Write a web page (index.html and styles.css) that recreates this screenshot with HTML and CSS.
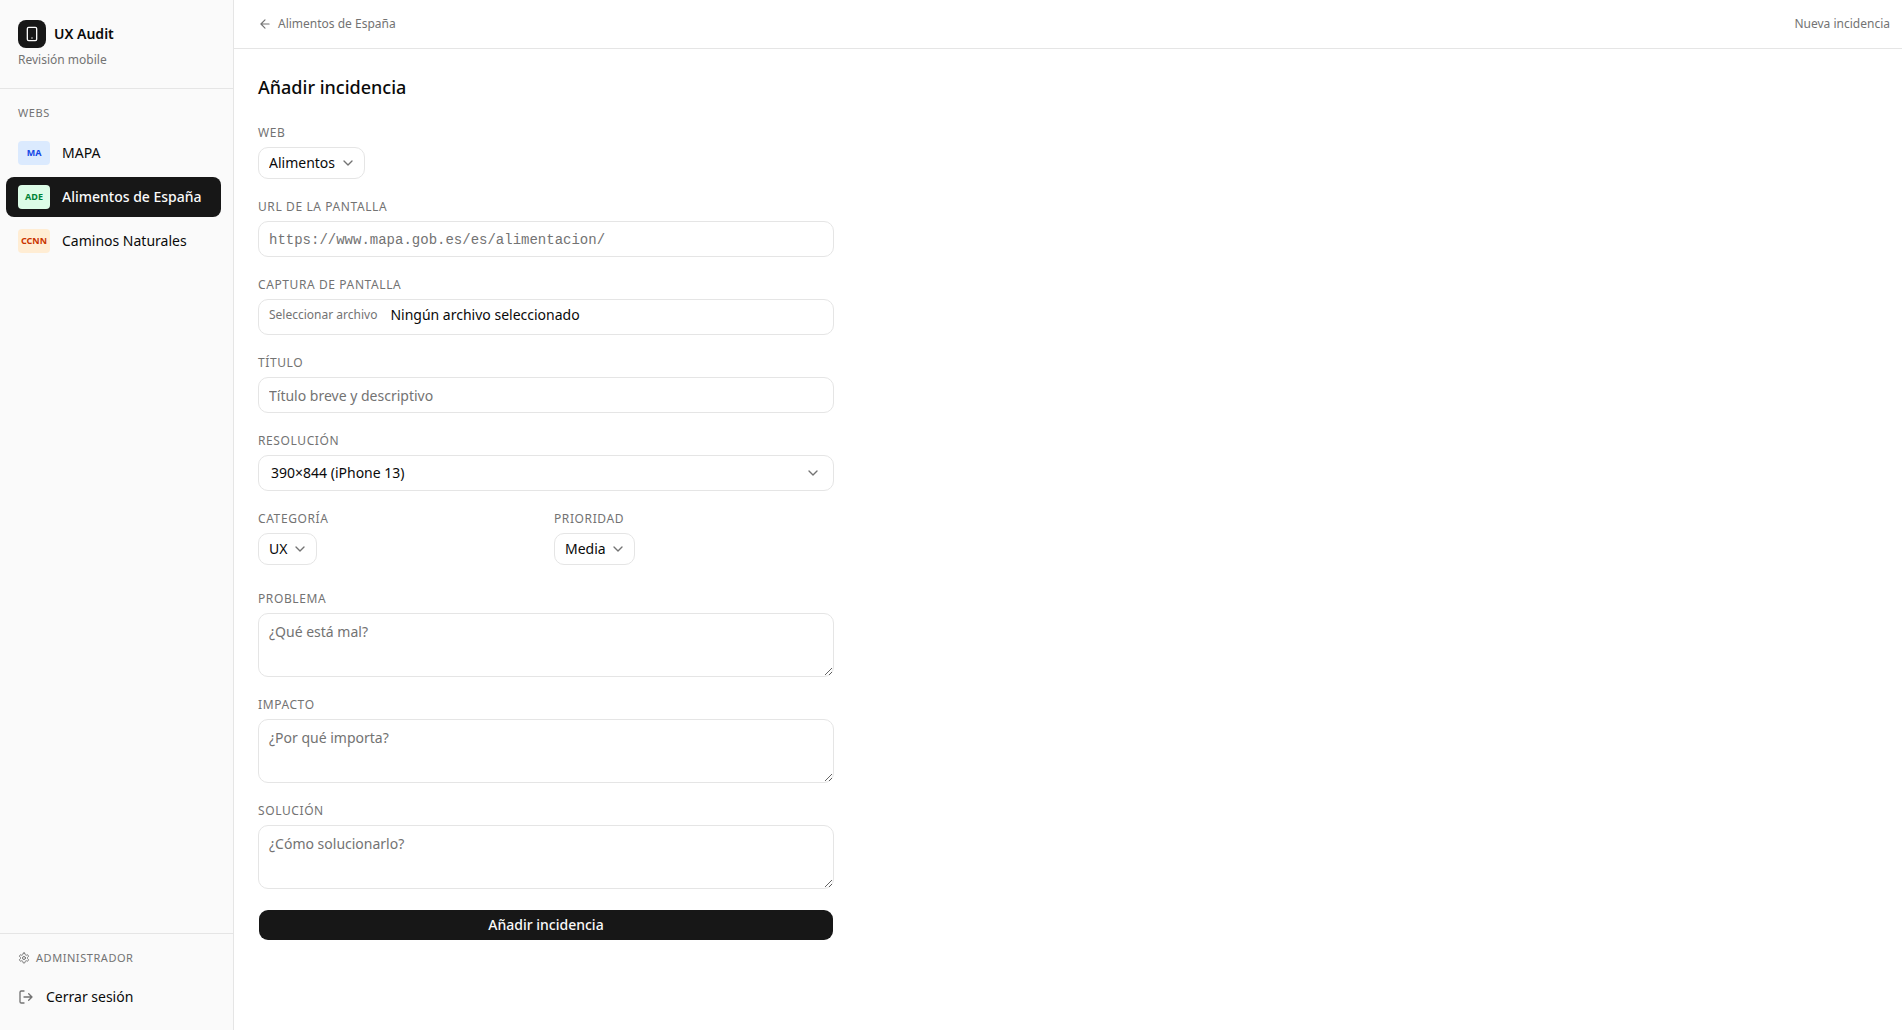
FILE: index.html
```html
<!DOCTYPE html>
<html lang="es">

<head>
	<meta charset="UTF-8">
	<meta name="viewport" content="width=device-width, initial-scale=1.0">
	<title>UX Audit</title>
	<link rel="stylesheet" href="styles.css">
</head>

<body>
	<div class="app">
		<aside class="sidebar">
			<div class="sidebar__header">
				<div class="brand">
					<span class="brand__logo">
						<svg class="icon" width="16" height="16" viewBox="0 0 24 24">
							<rect x="5" y="2" width="14" height="20" rx="2" />
							<path d="M12 18h.01" />
						</svg>
					</span>
					<span class="brand__name">UX Audit</span>
				</div>
				<p class="brand__text">Revisión mobile</p>
			</div>
			<nav class="sidebar__nav">
				<h2 class="sidebar__title">Webs</h2>
				<a class="nav__item" href="#"><span class="badge badge--blue">MA</span>MAPA</a>
				<a class="nav__item nav__item--active" href="#"><span class="badge badge--green">ADE</span>Alimentos de España</a>
				<a class="nav__item" href="#"><span class="badge badge--orange">CCNN</span>Caminos Naturales</a>
			</nav>
			<div class="sidebar__footer">
				<div class="role">
					<svg class="icon" width="12" height="12" viewBox="0 0 24 24">
						<path d="M12.22 2h-.44a2 2 0 0 0-2 2v.18a2 2 0 0 1-1 1.73l-.43.25a2 2 0 0 1-2 0l-.15-.08a2 2 0 0 0-2.73.73l-.22.38a2 2 0 0 0 .73 2.73l.15.1a2 2 0 0 1 1 1.72v.51a2 2 0 0 1-1 1.74l-.15.09a2 2 0 0 0-.73 2.73l.22.38a2 2 0 0 0 2.73.73l.15-.08a2 2 0 0 1 2 0l.43.25a2 2 0 0 1 1 1.73V20a2 2 0 0 0 2 2h.44a2 2 0 0 0 2-2v-.18a2 2 0 0 1 1-1.73l.43-.25a2 2 0 0 1 2 0l.15.08a2 2 0 0 0 2.73-.73l.22-.39a2 2 0 0 0-.73-2.73l-.15-.08a2 2 0 0 1-1-1.74v-.5a2 2 0 0 1 1-1.74l.15-.09a2 2 0 0 0 .73-2.73l-.22-.38a2 2 0 0 0-2.73-.73l-.15.08a2 2 0 0 1-2 0l-.43-.25a2 2 0 0 1-1-1.73V4a2 2 0 0 0-2-2z" />
						<circle cx="12" cy="12" r="3" />
					</svg>
					Administrador
				</div>
				<button class="logout" type="button">
					<svg class="icon" width="16" height="16" viewBox="0 0 24 24">
						<path d="M9 21H5a2 2 0 0 1-2-2V5a2 2 0 0 1 2-2h4M16 17l5-5-5-5M21 12H9" />
					</svg>
					Cerrar sesión
				</button>
			</div>
		</aside>

		<div class="content">
			<header class="topbar">
				<a class="topbar__back" href="#">
					<svg class="icon" width="14" height="14" viewBox="0 0 24 24">
						<path d="M12 19l-7-7 7-7M19 12H5" />
					</svg>
					Alimentos de España
				</a>
				<span>Nueva incidencia</span>
			</header>
			<main class="main">
				<h1 class="main__title">Añadir incidencia</h1>
				<form class="form">
					<div class="field">
						<label class="field__label" for="web">Web</label>
						<div class="select">
							<select id="web">
								<option>Alimentos</option>
							</select>
							<svg class="icon select__arrow" width="16" height="16" viewBox="0 0 24 24"><path d="M6 9l6 6 6-6" /></svg>
						</div>
					</div>
					<div class="field">
						<label class="field__label" for="url">URL de la pantalla</label>
						<input class="input input--mono" type="url" id="url" placeholder="https://www.mapa.gob.es/es/alimentacion/">
					</div>
					<div class="field">
						<label class="field__label" for="captura">Captura de pantalla</label>
						<div class="file">
							<span class="file__btn">Seleccionar archivo</span>
							<span>Ningún archivo seleccionado</span>
							<input class="file__input" type="file" id="captura">
						</div>
					</div>
					<div class="field">
						<label class="field__label" for="titulo">Título</label>
						<input class="input" type="text" id="titulo" placeholder="Título breve y descriptivo">
					</div>
					<div class="field">
						<label class="field__label" for="resolucion">Resolución</label>
						<div class="select select--full">
							<select id="resolucion">
								<option>390×844 (iPhone 13)</option>
							</select>
							<svg class="icon select__arrow" width="16" height="16" viewBox="0 0 24 24"><path d="M6 9l6 6 6-6" /></svg>
						</div>
					</div>
					<div class="form__row">
						<div class="field">
							<label class="field__label" for="categoria">Categoría</label>
							<div class="select">
								<select id="categoria">
									<option>UX</option>
								</select>
								<svg class="icon select__arrow" width="16" height="16" viewBox="0 0 24 24"><path d="M6 9l6 6 6-6" /></svg>
							</div>
						</div>
						<div class="field">
							<label class="field__label" for="prioridad">Prioridad</label>
							<div class="select">
								<select id="prioridad">
									<option>Media</option>
								</select>
								<svg class="icon select__arrow" width="16" height="16" viewBox="0 0 24 24"><path d="M6 9l6 6 6-6" /></svg>
							</div>
						</div>
					</div>
					<div class="field">
						<label class="field__label" for="problema">Problema</label>
						<textarea class="input textarea" id="problema" placeholder="¿Qué está mal?"></textarea>
					</div>
					<div class="field">
						<label class="field__label" for="impacto">Impacto</label>
						<textarea class="input textarea" id="impacto" placeholder="¿Por qué importa?"></textarea>
					</div>
					<div class="field">
						<label class="field__label" for="solucion">Solución</label>
						<textarea class="input textarea" id="solucion" placeholder="¿Cómo solucionarlo?"></textarea>
					</div>
					<button class="submit" type="submit">Añadir incidencia</button>
				</form>
			</main>
		</div>
	</div>
</body>

</html>
```
FILE: styles.css
```css
* {
	box-sizing: border-box;
	margin: 0;
	padding: 0;
}

body {
	font-family: "Noto Sans", sans-serif;
	font-size: 14px;
	line-height: 20px;
	color: #0a0a0a;
	background: #fff;
}

a {
	color: inherit;
	text-decoration: none;
}

input,
select,
textarea,
button {
	font: inherit;
	color: inherit;
}

.icon {
	flex-shrink: 0;
	fill: none;
	stroke: currentColor;
	stroke-width: 2;
	stroke-linecap: round;
	stroke-linejoin: round;
}

.app {
	display: flex;
	min-height: 100vh;
}

/* sidebar */

.sidebar {
	display: flex;
	flex-direction: column;
	width: 234px;
	flex-shrink: 0;
	background: #fafafa;
	border-right: 1px solid #e5e5e5;
}

.sidebar__header {
	padding: 20px 18px;
	border-bottom: 1px solid #e5e5e5;
}

.brand {
	display: flex;
	align-items: center;
	gap: 8px;
}

.brand__logo {
	display: flex;
	align-items: center;
	justify-content: center;
	width: 28px;
	height: 28px;
	border-radius: 8px;
	background: #171717;
	color: #fafafa;
}

.brand__name {
	font-weight: 600;
}

.brand__text {
	margin-top: 4px;
	font-size: 12px;
	line-height: 16px;
	color: #737373;
}

.sidebar__nav {
	display: flex;
	flex-direction: column;
	gap: 4px;
	flex: 1;
	padding: 16px 12px 0 6px;
}

.sidebar__title {
	padding: 0 12px;
	margin-bottom: 8px;
	font-size: 11px;
	font-weight: 400;
	line-height: 16px;
	letter-spacing: 0.05em;
	text-transform: uppercase;
	color: #737373;
}

.nav__item {
	display: flex;
	align-items: center;
	gap: 12px;
	height: 40px;
	padding: 0 12px;
	border-radius: 8px;
}

.nav__item--active {
	background: #171717;
	color: #fafafa;
	font-weight: 500;
}

.badge {
	width: 32px;
	border-radius: 4px;
	font-size: 9px;
	font-weight: 700;
	line-height: 24px;
	text-align: center;
}

.badge--blue {
	background: #dbeafe;
	color: #1447e6;
}

.badge--green {
	background: #dcfce7;
	color: #008236;
}

.badge--orange {
	background: #ffedd4;
	color: #ca3500;
}

.sidebar__footer {
	padding: 16px 18px 23px;
	border-top: 1px solid #e5e5e5;
}

.role {
	display: flex;
	align-items: center;
	gap: 6px;
	font-size: 11px;
	line-height: 16px;
	letter-spacing: 0.05em;
	text-transform: uppercase;
	color: #737373;
}

.logout {
	display: flex;
	align-items: center;
	gap: 12px;
	margin-top: 21px;
	border: none;
	background: none;
}

.logout .icon {
	color: #737373;
}

/* content */

.content {
	flex: 1;
	min-width: 0;
}

.topbar {
	display: flex;
	align-items: center;
	justify-content: space-between;
	height: 49px;
	padding: 0 12px 0 24px;
	border-bottom: 1px solid #e5e5e5;
	font-size: 12px;
	color: #737373;
}

.topbar__back {
	display: flex;
	align-items: center;
	gap: 6px;
}

.main {
	padding: 24px;
}

.main__title {
	margin-bottom: 24px;
	font-size: 18px;
	font-weight: 500;
	line-height: 28px;
}

.form {
	display: flex;
	flex-direction: column;
	gap: 20px;
	max-width: 576px;
}

.form__row {
	display: grid;
	grid-template-columns: 1fr 1fr;
	gap: 16px;
	padding-bottom: 6px;
}

.field {
	display: flex;
	flex-direction: column;
	align-items: flex-start;
	gap: 6px;
}

.field__label {
	font-size: 12px;
	line-height: 16px;
	letter-spacing: 0.05em;
	text-transform: uppercase;
	color: #737373;
}

.input {
	width: 100%;
	height: 36px;
	padding: 4px 10px;
	border: 1px solid #e5e5e5;
	border-radius: 10px;
	background: transparent;
}

.input::placeholder {
	color: #737373;
}

.input--mono {
	padding-top: 6px;
	font-family: "Liberation Mono", monospace;
}

.textarea {
	display: block;
	height: 64px;
	padding: 8px 10px;
	resize: vertical;
}

.select {
	position: relative;
}

.select select {
	appearance: none;
	height: 32px;
	padding: 0 28px 0 10px;
	border: 1px solid #e5e5e5;
	border-radius: 10px;
	background: transparent;
}

.select__arrow {
	position: absolute;
	top: 8px;
	right: 9px;
	color: #737373;
	pointer-events: none;
}

.select--full {
	width: 100%;
}

.select--full select {
	width: 100%;
	height: 36px;
	padding-left: 12px;
}

.select--full .select__arrow {
	top: 10px;
	right: 13px;
}

.file {
	position: relative;
	display: flex;
	gap: 13px;
	width: 100%;
	height: 36px;
	padding: 5px 10px;
	border: 1px solid #e5e5e5;
	border-radius: 10px;
}

.file__btn {
	font-size: 12px;
	color: #737373;
}

/* the native input covers the whole box */
.file__input {
	position: absolute;
	inset: 0;
	width: 100%;
	opacity: 0;
	cursor: pointer;
}

.submit {
	height: 32px;
	border: 1px solid transparent;
	border-radius: 10px;
	background: #171717;
	background-clip: padding-box;
	color: #fafafa;
	font-weight: 500;
}
```
